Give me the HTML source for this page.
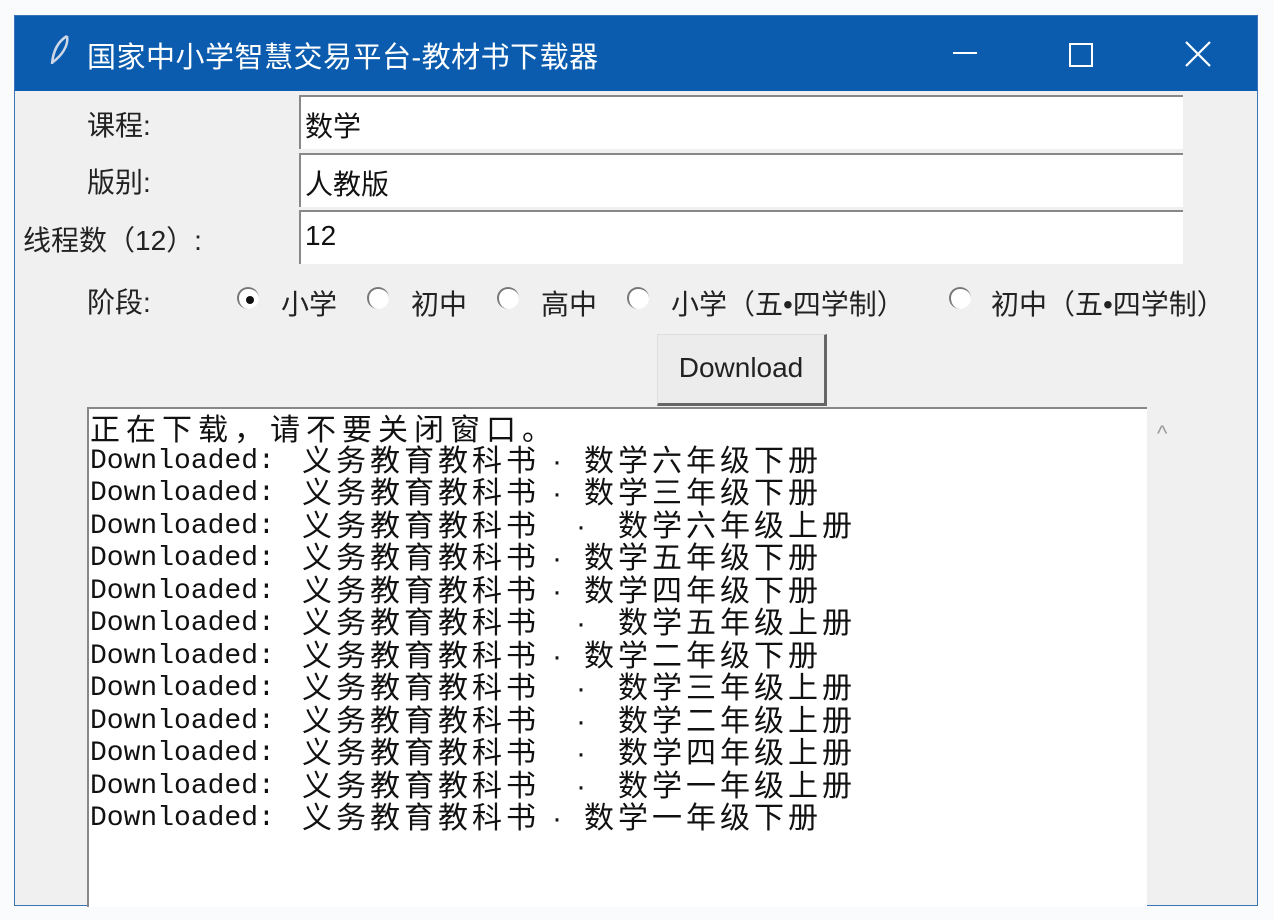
<!DOCTYPE html>
<html><head><meta charset="utf-8"><style>
body{margin:0;width:1274px;height:920px;background:#fafbfc;position:relative;overflow:hidden;font-family:"Liberation Sans","Noto Sans CJK SC",sans-serif}
.win{position:absolute;left:14px;top:15px;width:1244px;height:891px;background:#f0f0f0;border:1px solid #3a73b8;box-sizing:border-box}
.title{position:absolute;left:0;top:0;width:100%;height:75px;background:#0b5cae;color:#fff}
.title .t{position:absolute;left:72px;top:18px;font-size:29px;letter-spacing:0.5px}
.lbl{position:absolute;font-size:28px;color:#222}
.inp{position:absolute;left:284px;width:884px;height:54px;background:#fff;border-top:2px solid #888;border-left:2px solid #888;box-sizing:border-box;font-size:28px;padding:8px 0 0 4px;color:#111}
.r{position:absolute;top:267px;font-size:28px;color:#222}
.rc{position:absolute;top:271px;width:22px;height:22px;border-radius:50%;border-left:2px solid #777;border-top:2px solid #777;box-sizing:border-box;background:#fff}
.btn{position:absolute;left:642px;top:318px;width:170px;height:72px;background:#ececec;border-right:3px solid #666;border-bottom:3px solid #666;border-top:1px solid #ddd;border-left:1px solid #ddd;box-sizing:border-box;font-size:28px;text-align:center;line-height:66px;color:#222}
.ta{position:absolute;left:72px;top:391px;width:1060px;height:500px;background:#fff;border-top:2px solid #888;border-left:2px solid #888;box-sizing:border-box}
.ln{position:absolute;font-size:30px;color:#111;white-space:nowrap;line-height:32px;letter-spacing:4px}
.m{font-family:"Liberation Mono",monospace;font-size:28px;letter-spacing:0}
</style></head><body>
<div class="win">
<div class="title"><svg style="position:absolute;left:32px;top:18px" width="26" height="34"><path d="M20 2 C10 8 6 18 5 30 M20 2 C22 12 14 22 6 28" stroke="#cfd8e6" stroke-width="2.5" fill="none"/></svg><div class="t">国家中小学智慧交易平台-教材书下载器</div>
<div style="position:absolute;left:938px;top:36px;width:24px;height:2px;background:#fff"></div>
<div style="position:absolute;left:1054px;top:27px;width:20px;height:20px;border:2px solid #fff"></div>
<svg style="position:absolute;left:1170px;top:25px" width="26" height="26"><path d="M1 1L25 25M25 1L1 25" stroke="#fff" stroke-width="2.2"/></svg>
</div>
<div class="lbl" style="left:72px;top:88px">课程:</div>
<div class="lbl" style="left:72px;top:145px">版别:</div>
<div class="lbl" style="left:8px;top:203px">线程数（12）:</div>
<div class="inp" style="top:79px">数学</div>
<div class="inp" style="top:137px">人教版</div>
<div class="inp" style="top:194px">12</div>
<div class="lbl" style="left:72px;top:265px">阶段:</div>
<div class="rc" style="left:222px"><div style="position:absolute;left:7px;top:7px;width:8px;height:8px;border-radius:50%;background:#111"></div></div>
<div class="r" style="left:266px">小学</div>
<div class="rc" style="left:352px"></div><div class="r" style="left:396px">初中</div>
<div class="rc" style="left:482px"></div><div class="r" style="left:526px">高中</div>
<div class="rc" style="left:612px"></div><div class="r" style="left:656px">小学（五•四学制）</div>
<div class="rc" style="left:934px"></div><div class="r" style="left:976px">初中（五•四学制）</div>
<div class="btn">Download</div>
<div class="ta"></div>
<div style="position:absolute;left:1142px;top:405px;font-size:22px;color:#999">^</div>
</div>
<div class="ln" style="left:90px;top:415px;letter-spacing:6px">正在下载，请不要关闭窗口。</div>

<div class="ln m" style="left:90px;top:446px">Downloaded:</div><div class="ln" style="left:302px;top:446px">义务教育教科书</div><div class="ln" style="left:552px;top:446px">·</div><div class="ln" style="left:584px;top:446px">数学六年级下册</div>
<div class="ln m" style="left:90px;top:478px">Downloaded:</div><div class="ln" style="left:302px;top:478px">义务教育教科书</div><div class="ln" style="left:552px;top:478px">·</div><div class="ln" style="left:584px;top:478px">数学三年级下册</div>
<div class="ln m" style="left:90px;top:511px">Downloaded:</div><div class="ln" style="left:302px;top:511px">义务教育教科书</div><div class="ln" style="left:576px;top:511px">·</div><div class="ln" style="left:618px;top:511px">数学六年级上册</div>
<div class="ln m" style="left:90px;top:543px">Downloaded:</div><div class="ln" style="left:302px;top:543px">义务教育教科书</div><div class="ln" style="left:552px;top:543px">·</div><div class="ln" style="left:584px;top:543px">数学五年级下册</div>
<div class="ln m" style="left:90px;top:576px">Downloaded:</div><div class="ln" style="left:302px;top:576px">义务教育教科书</div><div class="ln" style="left:552px;top:576px">·</div><div class="ln" style="left:584px;top:576px">数学四年级下册</div>
<div class="ln m" style="left:90px;top:608px">Downloaded:</div><div class="ln" style="left:302px;top:608px">义务教育教科书</div><div class="ln" style="left:576px;top:608px">·</div><div class="ln" style="left:618px;top:608px">数学五年级上册</div>
<div class="ln m" style="left:90px;top:641px">Downloaded:</div><div class="ln" style="left:302px;top:641px">义务教育教科书</div><div class="ln" style="left:552px;top:641px">·</div><div class="ln" style="left:584px;top:641px">数学二年级下册</div>
<div class="ln m" style="left:90px;top:673px">Downloaded:</div><div class="ln" style="left:302px;top:673px">义务教育教科书</div><div class="ln" style="left:576px;top:673px">·</div><div class="ln" style="left:618px;top:673px">数学三年级上册</div>
<div class="ln m" style="left:90px;top:706px">Downloaded:</div><div class="ln" style="left:302px;top:706px">义务教育教科书</div><div class="ln" style="left:576px;top:706px">·</div><div class="ln" style="left:618px;top:706px">数学二年级上册</div>
<div class="ln m" style="left:90px;top:738px">Downloaded:</div><div class="ln" style="left:302px;top:738px">义务教育教科书</div><div class="ln" style="left:576px;top:738px">·</div><div class="ln" style="left:618px;top:738px">数学四年级上册</div>
<div class="ln m" style="left:90px;top:771px">Downloaded:</div><div class="ln" style="left:302px;top:771px">义务教育教科书</div><div class="ln" style="left:576px;top:771px">·</div><div class="ln" style="left:618px;top:771px">数学一年级上册</div>
<div class="ln m" style="left:90px;top:803px">Downloaded:</div><div class="ln" style="left:302px;top:803px">义务教育教科书</div><div class="ln" style="left:552px;top:803px">·</div><div class="ln" style="left:584px;top:803px">数学一年级下册</div>
</body></html>
